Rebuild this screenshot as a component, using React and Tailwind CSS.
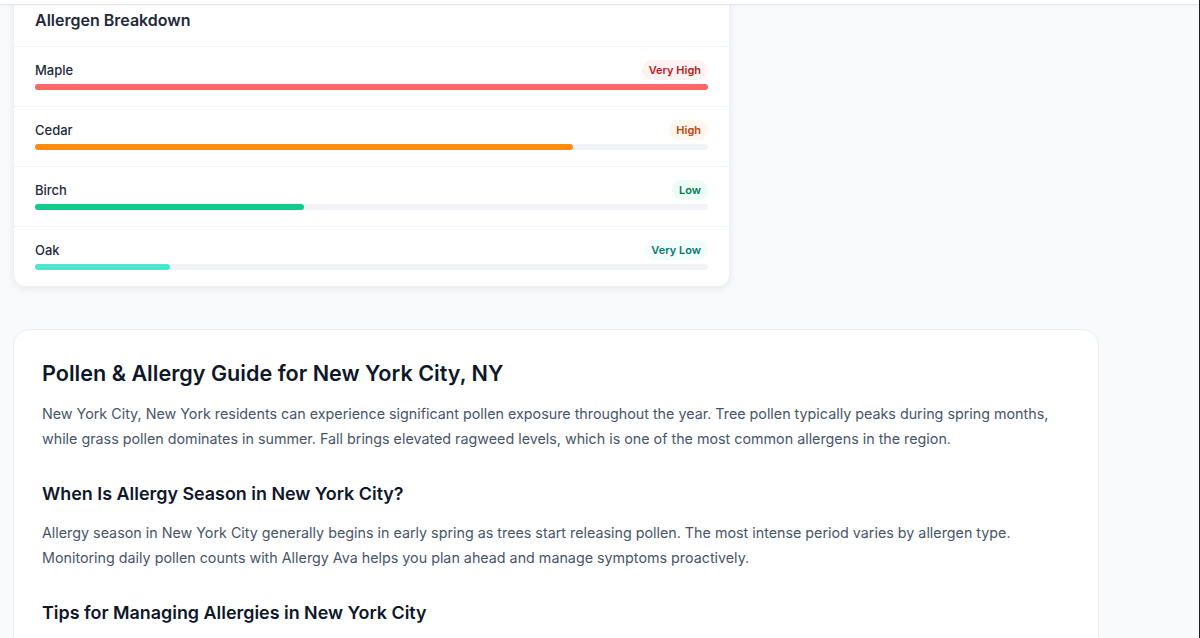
import React from 'react';

const allergens = [
  { name: 'Maple', level: 'Very High', pct: 100, bar: 'bg-[#ff6666]', badge: 'bg-[#fef2f2] text-[#b91c1c]' },
  { name: 'Cedar', level: 'High', pct: 80, bar: 'bg-[#ff8c0a]', badge: 'bg-[#fff7ed] text-[#c2410c]' },
  { name: 'Birch', level: 'Low', pct: 40, bar: 'bg-[#10cc88]', badge: 'bg-[#ecfdf5] text-[#047857]' },
  { name: 'Oak', level: 'Very Low', pct: 20, bar: 'bg-[#4ce6cc]', badge: 'bg-[#f0fdfa] text-[#0f766e]' },
];

function AllergenRow({ item, last }) {
  return (
    <div className={`px-[21px] pt-[12px] pb-[16px] ${last ? '' : 'border-b border-[#f1f3f5]'}`}>
      <div className="flex h-[22px] items-center justify-between">
        <span className="mt-[2px] text-[13px] font-medium text-[#1e293b]">{item.name}</span>
        <span className={`rounded-full px-[7px] py-[2px] text-[11px] font-semibold ${item.badge}`}>{item.level}</span>
      </div>
      <div className="mt-[3px] h-[6px] w-full rounded-full bg-[#f1f3f6]">
        <div className={`h-full rounded-full ${item.bar}`} style={{ width: `${item.pct}%` }} />
      </div>
    </div>
  );
}

export default function App() {
  return (
    <div className="min-h-screen bg-[#f8fafc] text-[#0f172a]" style={{ fontFamily: 'Inter, "Noto Sans", sans-serif' }}>
      {/* sticky header edge */}
      <div className="fixed inset-x-0 top-0 z-10 h-[5px] border-b border-[#e5e8ec] bg-white shadow-[0_1px_2px_rgba(15,23,42,0.04)]" />
      <div className="fixed right-0 top-0 z-20 h-full w-px bg-[#1f1f1f]" />

      <main className="ml-[13px] w-[1086px] pb-10">
        {/* Allergen breakdown card */}
        <div className="grid grid-cols-3 gap-6">
          <section className="col-span-2 -mt-[8px] w-[717px] rounded-b-xl border border-[#eef0f3] bg-white shadow-[0_2px_8px_rgba(15,23,42,0.07)]">
            <div className="border-b border-[#f1f3f5] px-[21px] pt-[15px] pb-[14px]">
              <h2 className="text-[16px] leading-[24px] font-semibold text-[#1e293b]">Allergen Breakdown</h2>
            </div>
            {allergens.map((a, i) => (
              <AllergenRow key={a.name} item={a} last={i === allergens.length - 1} />
            ))}
          </section>
        </div>

        {/* Guide card */}
        <article className="mt-[42px] rounded-2xl border border-[#e8edf1] bg-white p-7">
          <h2 className="text-[21.6px] leading-[30px] font-semibold text-[#0f172a]">Pollen &amp; Allergy Guide for New York City, NY</h2>
          <p className="mt-[13px] text-[14.3px] leading-[25px] text-[#475569]">
            New York City, New York residents can experience significant pollen exposure throughout the year. Tree pollen typically peaks during spring months, while grass pollen dominates in summer. Fall brings elevated ragweed levels, which is one of the most common allergens in the region.
          </p>

          <h3 className="mt-[29px] text-[17.9px] leading-[28px] font-semibold text-[#0f172a]">When Is Allergy Season in New York City?</h3>
          <p className="mt-[12px] text-[14.3px] leading-[25px] text-[#475569]">
            Allergy season in New York City generally begins in early spring as trees start releasing pollen. The most intense period varies by allergen type. Monitoring daily pollen counts with Allergy Ava helps you plan ahead and manage symptoms proactively.
          </p>

          <h3 className="mt-[29px] text-[17.9px] leading-[28px] font-semibold text-[#0f172a]">Tips for Managing Allergies in New York City</h3>
        </article>
      </main>
    </div>
  );
}
